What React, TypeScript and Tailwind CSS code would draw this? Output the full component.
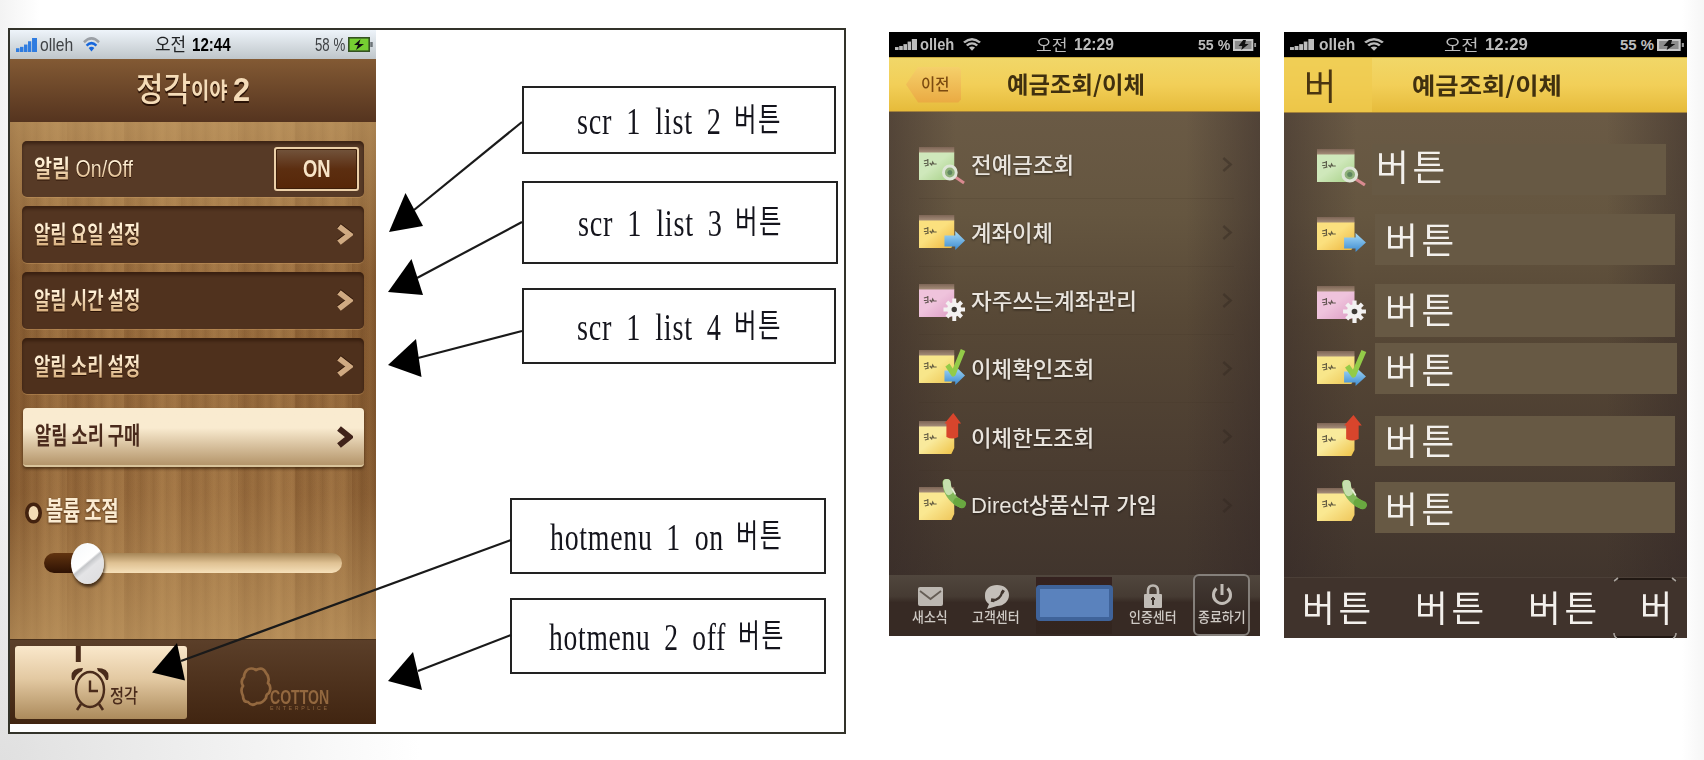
import React, { useLayoutEffect, useRef, useState } from "react";
import clsx from "clsx";

/* Text squeezed or stretched horizontally to the width of its box. */
function Fit({ className, ink, children }: { className?: string; ink?: string; children: React.ReactNode }) {
  const outer = useRef<HTMLSpanElement>(null);
  const inner = useRef<HTMLSpanElement>(null);
  const [scale, setScale] = useState(1);
  useLayoutEffect(() => {
    if (outer.current && inner.current && inner.current.offsetWidth > 0) {
      setScale(outer.current.clientWidth / inner.current.offsetWidth);
    }
  }, []);
  return (
    <span ref={outer} className={clsx("block shrink-0 whitespace-nowrap leading-none", className)}>
      <span ref={inner} className={clsx("inline-block origin-left", ink)} style={{ transform: `scaleX(${scale})` }}>
        {children}
      </span>
    </span>
  );
}

const SANS = "font-['Liberation_Sans','Noto_Sans_CJK_KR',sans-serif]";
const KR = "font-['Noto_Sans_CJK_KR',sans-serif]";

function Signal({ className }: { className: string }) {
  return (
    <svg viewBox="0 0 22 15" preserveAspectRatio="none" className={className} fill="currentColor">
      <rect x="0" y="11" width="3.6" height="4" />
      <rect x="4.2" y="9.5" width="3.6" height="5.5" />
      <rect x="8.4" y="7" width="3.6" height="8" />
      <rect x="12.6" y="3.5" width="3.4" height="11.5" />
      <rect x="16.8" y="0" width="5.2" height="15" />
    </svg>
  );
}

function Wifi({ className, top }: { className: string; top: string }) {
  return (
    <svg viewBox="0 0 18 15" preserveAspectRatio="none" className={className} fill="none" strokeWidth="2.6">
      <path d="M1 5.2 Q9 -2.4 17 5.2" stroke={top} />
      <path d="M3.8 8.6 Q9 3.8 14.2 8.6" stroke="currentColor" />
      <path d="M6 11 Q9 8.4 12 11 L9 14.6Z" fill="currentColor" stroke="none" />
    </svg>
  );
}

function Chevron({ className, w }: { className: string; w: number }) {
  return (
    <svg viewBox="0 0 16 22" preserveAspectRatio="none" className={className} fill="none" stroke="currentColor" strokeWidth={w}>
      <path d="M2 2.5 L12.5 11 L2 19.5" />
    </svg>
  );
}

/* ---------- Alarm phone ---------- */

const rowBase =
  "flex shrink-0 items-center justify-between rounded-[5px] pl-3 shadow-[inset_0_3px_3px_rgba(30,12,0,.45),0_1px_0_rgba(215,165,105,.35)]";
const goldInk = "bg-linear-to-b from-[#fff0d6] from-30% to-[#d3a670] bg-clip-text py-1 -my-1 text-transparent drop-shadow-[0_1px_0_#2a1205]";

function AlarmRow({ label, className, tone }: { label: string; className: string; tone: string }) {
  return (
    <div className={clsx(rowBase, "w-[342px] pr-[11px]", tone, className)}>
      <Fit ink={goldInk} className={clsx("-mt-[3px] w-[106px] text-[24px] font-bold", KR)}>{label}</Fit>
      <Chevron w={5.6} className="h-[21px] w-4 text-[#d0aa82] drop-shadow-[0_-1px_0_#2a1205]" />
    </div>
  );
}

function AlarmClock() {
  return (
    <svg viewBox="0 0 38 66" className="h-[66px] w-[38px] shrink-0" fill="none" stroke="#4a2b1b" strokeWidth="2.4">
      <path d="M7.3 0v16" strokeWidth="5" />
      <ellipse cx="19" cy="43.500" rx="14" ry="17.5" />
      <path d="M19 34.5V45h8" />
      <path d="M1 34q-3-12 11-12 l-1 3q-6 3-8 9z M37 34q3-12-11-12l1 3q6 3 8 9z" fill="#4a2b1b" stroke="none" />
      <path d="M10 58l-4 6 M28 58l4 6" strokeWidth="2.6" />
    </svg>
  );
}

function AlarmPhone() {
  return (
    <div className="flex h-[694px] w-[366px] shrink-0 flex-col bg-[#94693c]">
      <div className="flex h-[29px] shrink-0 items-center bg-linear-to-b from-[#eef4fa] to-[#bfc6ca] text-[#3f4245]">
        <Signal className="ml-[6px] h-[14px] w-[21px] text-[#2f7ce0]" />
        <Fit className={clsx("ml-[3px] w-[33px] text-[19px]", SANS)}>olleh</Fit>
        <Wifi top="#9a9fa5" className="ml-[10px] h-[15px] w-[17px] text-[#1767dc]" />
        <Fit className={clsx("-mt-[3px] ml-[55px] w-[31px] text-[18px] text-[#202224]", KR)}>오전</Fit>
        <Fit className={clsx("ml-[6px] w-[39px] text-[19px] font-bold text-black", SANS)}>12:44</Fit>
        <Fit className={clsx("ml-[84px] w-[30px] text-[19px]", SANS)}>58 %</Fit>
        <svg viewBox="0 0 26 15" className="ml-[3px] h-[15px] w-[26px]">
          <rect x=".8" y=".8" width="20.4" height="13.4" fill="#76cf32" stroke="#345221" strokeWidth="1.6" />
          <path d="M23.5 5v5" stroke="#6d7478" strokeWidth="2.5" />
          <path d="M12.5 2.2 6 8h4l-2 5 8-6h-5z" fill="#111" />
        </svg>
      </div>
      <div className="flex h-[63px] shrink-0 items-center justify-center bg-linear-to-b from-[#835a34] to-[#55341f]">
        <Fit className={clsx("-mt-[5px] w-[114px] font-bold text-[#f5dcb8] drop-shadow-[0_2px_0_#2a1205]", KR)}>
          <span className="text-[33px] font-medium">정각</span>
          <span className="align-[3px] text-[22px]">이야</span>
          <span className="ml-1.5 font-['Liberation_Sans'] text-[34px] font-bold">2</span>
        </Fit>
      </div>
      <div className="flex h-[517px] shrink-0 flex-col bg-[linear-gradient(180deg,rgba(198,160,104,.6)_0%,rgba(150,104,56,.1)_30%,rgba(120,76,36,.15)_55%,rgba(150,104,56,.1)_72%,rgba(196,158,102,.6)_100%),linear-gradient(90deg,rgba(60,25,0,.14)_0%,transparent_12%,rgba(225,180,115,.12)_50%,transparent_88%,rgba(60,25,0,.16)_100%),repeating-linear-gradient(90deg,rgba(60,28,4,.09)_0px,rgba(60,28,4,0)_5px,rgba(225,175,110,.08)_9px,rgba(60,28,4,.05)_13px),repeating-linear-gradient(90deg,rgba(80,36,6,.12)_0px,rgba(80,36,6,.02)_24px,rgba(222,176,112,.14)_40px,rgba(222,176,112,.08)_57px)] px-3 pt-[19px]">
        <div className={clsx(rowBase, "h-[56px] w-[342px] bg-[#573a26] pr-[5px]")}>
          <Fit ink={goldInk} className={clsx("w-[99px] text-[24px] font-medium", SANS)}>
            <span className="font-bold">알림</span> On/Off
          </Fit>
          <div className="flex h-[44px] w-[85px] items-center justify-center rounded-[3px] border-2 border-[#ecd0a8] bg-linear-to-b from-[#72543c] via-[#5c2e10] via-50% to-[#572708] shadow-[inset_0_0_0_1px_#3d1e0a]">
            <Fit className={clsx("w-[28px] text-[23px] font-bold text-[#f8e4c7]", SANS)}>ON</Fit>
          </div>
        </div>
        <AlarmRow label="알림 요일 설정" tone="bg-[#533521]" className="mt-[9px] h-[57px]" />
        <AlarmRow label="알림 시간 설정" tone="bg-[#50321e]" className="mt-[9px] h-[57px]" />
        <AlarmRow label="알림 소리 설정" tone="bg-[#4e301c]" className="mt-[9px] h-[56px]" />
        <div className="mt-[14px] ml-px flex h-[59px] w-[341px] shrink-0 items-center justify-between rounded-[4px] border-b-2 border-[#d9c49b] bg-linear-to-b from-[#f9ebd0] from-35% to-[#b4956a] pr-[11px] pl-3 shadow-[0_2px_3px_rgba(40,20,0,.6)]">
          <Fit className={clsx("-mt-[5px] w-[105px] text-[24px] font-bold text-[#4a2a1c]", KR)}>알림 소리 구매</Fit>
          <Chevron w={6} className="h-[22px] w-4 text-[#40231a]" />
        </div>
        <div className="mt-[31px] ml-[3px] flex h-[30px] items-center">
          <svg viewBox="0 0 17 22" className="h-[22px] w-[17px]">
            <ellipse cx="8.5" cy="11" rx="6.7" ry="8.8" fill="#f3dcb6" stroke="#43220f" strokeWidth="3.6" />
          </svg>
          <Fit className={clsx("-mt-[8px] ml-[4px] w-[73px] text-[26px] font-bold text-[#fbecd2] drop-shadow-[0_1px_1px_#4b2a10]", KR)}>볼륨 조절</Fit>
        </div>
        <div className="mt-[14px] ml-[22px] flex h-[42px] w-[298px] items-center">
          <div className="h-[20px] w-[44px] shrink-0 rounded-l-full bg-linear-to-b from-[#623410] to-[#2e1204]" />
          <div className="h-[20px] w-[254px] shrink-0 rounded-r-full bg-linear-to-b from-[#a58556] via-[#dfc193] via-50% to-[#f6e0b9]" />
          <div className="-ml-[271px] h-[41px] w-[33px] shrink-0 rounded-[50%] bg-[linear-gradient(140deg,#f5f8fa_0%,#fff_46%,#c4c6c9_50%,#e4e4e6_60%,#dcdcde_100%)] shadow-[1px_3px_3px_rgba(30,15,5,.7)]" />
        </div>
      </div>
      <div className="flex h-[85px] shrink-0 border-t border-[#48301b] bg-linear-to-b from-[#5b3f29] to-[#412511] pt-[6px] pl-[5px]">
        <div className="flex h-[73px] w-[172px] shrink-0 rounded-[3px] bg-linear-to-b from-[#fae8cb] via-[#e3c9a2] via-45% to-[#ac8b5c] pl-[56px]">
          <AlarmClock />
          <Fit className={clsx("mt-[39px] ml-[1px] w-[28px] text-[19px] font-medium text-[#4a2b1b]", KR)}>정각</Fit>
        </div>
        <svg viewBox="0 0 34 44" className="mt-[19px] ml-[52px] h-[44px] w-[34px] shrink-0" fill="none" stroke="#93683f" strokeWidth="2.7">
          <path d="M8 5q4-3 9 0 7-4 10 3 4 4 2 10 4 4 1 10-3 1-3 5-4 6-9 5-5 4-9-1-5 0-5-6-3-6 0-10-3-5 1-9 0-4 3-7Z" />
        </svg>
        <div className="mt-[40px] -ml-[3px] text-[#93683f]">
          <Fit className={clsx("w-[59px] text-[21px] font-bold", SANS)}>COTTON</Fit>
          <Fit className={clsx("-mt-[2px] w-[60px] text-[6px] tracking-[3px]", SANS)}>ENTERPLICE</Fit>
        </div>
      </div>
    </div>
  );
}

/* ---------- Callouts ---------- */

function Callout({ text, className, width }: { text: string; className: string; width: string }) {
  return (
    <div className={clsx("flex shrink-0 items-center border-2 border-[#222] bg-white", className)}>
      <Fit className={clsx("font-['Liberation_Serif',serif] text-[37px] text-[#14141c] [word-spacing:8px] tracking-[1px]", width)}>
        {text}
        <span className={clsx("ml-[16px] align-[3px] text-[32px] tracking-[2px]", KR)}>버튼</span>
      </Fit>
    </div>
  );
}

const arrows = [
  { line: "M522 122L414 210", head: "389,232 405.5,193 423,226" },
  { line: "M522 222L417 278", head: "388,292 411.5,259 423,295" },
  { line: "M522 331L418 358", head: "388,365 416,339 421.5,377" },
  { line: "M511 540L181 661", head: "152,672.5 177,643 185,680.5" },
  { line: "M511 635L418 671", head: "388,681 413,652 422,690" },
];

/* ---------- Bank phones ---------- */

type Kind = "search" | "arrow" | "gear" | "check" | "limit" | "call";

const paper: Record<Kind, [string, string]> = {
  search: ["#cfe8bb", "#a5cf84"],
  arrow: ["#fbe07e", "#ecb43c"],
  gear: ["#efc3dc", "#dc9cc4"],
  check: ["#f8e68a", "#ecc452"],
  limit: ["#f9ea9c", "#efc347"],
  call: ["#fae891", "#efc65a"],
};

function NoteIcon({ kind, className }: { kind: Kind; className: string }) {
  const [light, dark] = paper[kind];
  const id = "paper-" + kind;
  return (
    <svg viewBox="0 0 48 40" preserveAspectRatio="none" className={clsx("shrink-0 overflow-visible", className)}>
      <defs>
        <linearGradient id={id} x1="0" y1="0" x2="1" y2="1">
          <stop offset="0" stopColor={light} />
          <stop offset=".45" stopColor={light} />
          <stop offset="1" stopColor={dark} />
        </linearGradient>
        <linearGradient id={id + "-blue"} x1="0" y1="0" x2="0" y2="1">
          <stop offset="0" stopColor="#a9dcf8" />
          <stop offset="1" stopColor="#3c8bd0" />
        </linearGradient>
        <linearGradient id={id + "-top"} x1="0" y1="0" x2="0" y2="1">
          <stop offset="0" stopColor="#7d6556" />
          <stop offset="1" stopColor="#a9917c" />
        </linearGradient>
      </defs>
      <rect x="0" y="3" width="36" height="6" fill={`url(#${id}-top)`} />
      <path d="M0 8.5H36V30L33 36H0Z" fill={`url(#${id})`} />
      <path d="M5 17l4-1M5 19.500h3M9 15v6M6 22l4-1M11 19l2 2 1-3 1 2h3" stroke="#3e3a2e" strokeWidth="1.2" fill="none" opacity=".8" />
      {kind === "search" && (
        <g fill="none">
          <path d="M37 33L46 39" stroke="#d98a90" strokeWidth="3" />
          <circle cx="31.500" cy="28.500" r="6.500" fill="#8fb07a" stroke="#dfe6d8" strokeWidth="3" />
          <circle cx="31.500" cy="28.500" r="2.500" fill="#5f8660" />
        </g>
      )}
      {(kind === "arrow" || kind === "check") && (
        <path d="M26 23.500H37V19L47 28.500L37 38V34.500H26Z" fill={`url(#${id}-blue)`} />
      )}
      {kind === "check" && <path d="M29 18l6 9L45 3" fill="none" stroke="#93cb48" strokeWidth="5" strokeLinejoin="round" />}
      {kind === "gear" && (
        <g stroke="#f3f1f1" strokeWidth="4">
          <path d="M36 17.500V40M25 28.500H47M28.500 21L43.500 36M43.500 21L28.500 36" />
          <circle cx="36" cy="28.500" r="5" fill="#3e3a36" strokeWidth="4.500" />
        </g>
      )}
      {kind === "limit" && <path d="M35 -5L43 5.500H40V19Q34 22 28 19V5.500H26Z" fill="#d8452c" />}
      {kind === "call" && (
        <g fill="none" strokeLinecap="round">
          <path d="M28 -1Q29 13 43 20" stroke="#82b95a" strokeWidth="8" />
          <path d="M28.500 -1Q28.500 3 30.500 7" stroke="#c6e0ae" strokeWidth="8" />
          <path d="M39 18l5 2" stroke="#69a840" strokeWidth="8" />
          <path d="M34 5l3 5" stroke="#e6f2d8" strokeWidth="1.500" />
        </g>
      )}
    </svg>
  );
}

function BankStatus({ wide }: { wide?: boolean }) {
  return (
    <div className="flex h-[25px] shrink-0 items-center bg-black text-[#bdbdbd]">
      <Signal className={clsx("ml-[6px] h-[11px]", wide ? "w-[24px]" : "w-[22px]")} />
      <Fit className={clsx("text-[16px] font-bold", wide ? "ml-[5px] w-[36px]" : "ml-[3px] w-[34px]", SANS)}>olleh</Fit>
      <Wifi top="#b9b9b9" className={clsx("ml-[9px] h-[13px]", wide ? "w-[20px]" : "w-[18px]")} />
      <Fit className={clsx("-mt-[2px] text-[16px]", wide ? "ml-[60px] w-[34px]" : "ml-[55px] w-[31px]", KR)}>오전</Fit>
      <Fit className={clsx("text-[16px] font-bold", wide ? "ml-[7px] w-[43px]" : "ml-[7px] w-[40px]", SANS)}>12:29</Fit>
      <Fit className={clsx("text-[15px] font-bold", wide ? "ml-[92px] w-[34px]" : "ml-[84px] w-[32px]", SANS)}>55 %</Fit>
      <svg viewBox="0 0 26 12" preserveAspectRatio="none" className={clsx("ml-[3px] h-[12px]", wide ? "w-[28px]" : "w-[24px]")}>
        <rect x="1" y="1" width="20" height="10" fill="#8c8c8c" stroke="#c8c8c8" strokeWidth="2" />
        <path d="M24 4v4" stroke="#999" strokeWidth="2" />
        <path d="M11 1L6 7h4l-1 4 8-6h-4l1-4z" fill="#111" />
      </svg>
    </div>
  );
}

const yellowBar = "flex shrink-0 items-center bg-linear-to-b from-[#f1d768] via-[#f2cf58] via-50% to-[#e6bb3a] border-t border-b border-t-[#c9a93d] border-b-[#a3813a]";
const brownBody = "bg-[linear-gradient(90deg,rgba(50,38,38,.4)_0%,transparent_18%,transparent_80%,rgba(50,38,38,.45)_100%),linear-gradient(180deg,#6a5a45_0%,#655640_22%,#574836_45%,#4b3d31_75%,#41352d_100%)]";

const menu: { kind: Kind; label: string; text: string; icon: string }[] = [
  { kind: "search", label: "전예금조회", text: "-mt-[3px] w-[103px]", icon: "-mt-[2px]" },
  { kind: "arrow", label: "계좌이체", text: "-mt-[3px] w-[82px]", icon: "-mt-[1px]" },
  { kind: "gear", label: "자주쓰는계좌관리", text: "-mt-[3px] w-[166px]", icon: "mt-[1px]" },
  { kind: "check", label: "이체확인조회", text: "-mt-[4px] w-[123px]", icon: "-mt-[4px]" },
  { kind: "limit", label: "이체한도조회", text: "-mt-[2px] w-[123px]", icon: "mt-[2px]" },
  { kind: "call", label: "Direct상품신규 가입", text: "mt-[1px] w-[186px]", icon: "-mt-[2px]" },
];

function Tab({ label, width, className, children }: { label: string; width: string; className: string; children: React.ReactNode }) {
  return (
    <div className={clsx("flex shrink-0 flex-col items-center", className)}>
      {children}
      <Fit className={clsx("mt-[3px] text-[14px] font-medium text-[#cfcac5]", width, KR)}>{label}</Fit>
    </div>
  );
}

function BankPhone() {
  return (
    <div className="mt-8 ml-[43px] flex h-[604px] w-[371px] shrink-0 flex-col">
      <BankStatus />
      <div className={clsx(yellowBar, "h-[55px]")}>
        <div className="ml-[17px] flex h-[36px] w-[55px] items-center bg-linear-to-b from-[#f5d06a] to-[#eaaa42] pl-[15px] [clip-path:polygon(0_50%,22%_0,95%_0,100%_8%,100%_92%,95%_100%,22%_100%)]">
          <Fit className={clsx("-mt-[3px] w-[28px] text-[16px] font-medium text-[#7b4a10]", KR)}>이전</Fit>
        </div>
        <Fit className={clsx("-mt-[2px] ml-[46px] w-[138px] text-[23px] font-bold text-[#40300f]", KR)}>예금조회/이체</Fit>
      </div>
      <div className={clsx("flex h-[463px] shrink-0 flex-col pt-[19px]", brownBody)}>
        {menu.map((m) => (
          <div key={m.kind} className="mr-[26px] ml-[30px] flex h-[68px] shrink-0 items-center border-b border-[#3c2f22]/15 last:border-0">
            <NoteIcon kind={m.kind} className={clsx("h-[40px] w-[47px]", m.icon)} />
            <Fit className={clsx("ml-[5px] text-[22px] font-medium text-[#e9e4dd] drop-shadow-[0_1px_1px_rgba(0,0,0,.5)]", m.text, m.kind === "call" ? SANS : KR)}>{m.label}</Fit>
            <Chevron w={3.5} className="mr-px ml-auto h-[17px] w-[11px] text-[#30261e]/40" />
          </div>
        ))}
      </div>
      <div className="flex h-[61px] shrink-0 bg-linear-to-b from-[#50463d] via-[#463b33] via-35% to-[#372a24] to-45%">
        <Tab label="새소식" width="w-[36px]" className="ml-[22px] w-[38px] pt-[12px]">
          <svg viewBox="0 0 25 19" className="h-[19px] w-[25px]">
            <rect width="25" height="19" rx="2" fill="#bcb7b1" />
            <path d="M2 4l10.500 8L23 4" fill="none" stroke="#655d55" strokeWidth="1.800" />
          </svg>
        </Tab>
        <Tab label="고객센터" width="w-[48px]" className="ml-[22px] w-[50px] pt-[10px]">
          <svg viewBox="0 0 26 24" className="-mb-[3px] h-[24px] w-[26px]">
            <path d="M14 0C21 0 26 4 26 10s-5 11-12 11l-10 3 2-5C2 16 2 13 2 10 2 4 7 0 14 0Z" fill="#c4bfb9" />
            <path d="M9 15.500q8 0 10.500-9" fill="none" stroke="#40352e" strokeWidth="2.400" />
            <path d="M8 15l3.500 .5M18.500 6l2.500 1.500" stroke="#40352e" strokeWidth="3.600" />
          </svg>
        </Tab>
        <div className="mt-[2px] ml-[15px] flex h-[57px] w-[76px] shrink-0 items-center justify-center bg-linear-to-b from-[#352220] to-[#33261f]">
          <div className="-mt-[6px] h-[36px] w-[77px] shrink-0 rounded-[4px] border-4 border-[#3f639a] bg-[#5a82bd]" />
        </div>
        <Tab label="인증센터" width="w-[48px]" className="ml-[16px] w-[50px] pt-[9px]">
          <svg viewBox="0 0 18 24" className="-mb-[2px] h-[24px] w-[18px]">
            <path d="M4 11V7q0-5.500 5-5.500T14 7v4" fill="none" stroke="#bcb7b1" strokeWidth="2.600" />
            <rect y="10" width="18" height="14" rx="1" fill="#c1bcb6" />
            <path d="M9 13v8M7 15h4" stroke="#3d332c" strokeWidth="2" />
          </svg>
        </Tab>
        <div className="-mt-[1px] ml-[15px] flex h-[62px] w-[57px] shrink-0 flex-col items-center rounded-[6px] border-2 border-[#85807b] bg-linear-to-b from-[#433a34] to-[#2d211c] pt-[8px]">
          <svg viewBox="0 0 22 22" className="h-[22px] w-[22px]" fill="none" stroke="#c1bcb6" strokeWidth="3">
            <path d="M5.500 4.500a8.500 8.500 0 1 0 11 0M11 0v11" />
          </svg>
          <Fit className={clsx("mt-[3px] w-[48px] text-[14px] font-medium text-[#cfcac5]", KR)}>종료하기</Fit>
        </div>
      </div>
    </div>
  );
}

const panels: { kind: Kind; gap: string; icon: string; panel: string; word: string }[] = [
  { kind: "search", gap: "mt-[31px] h-[51px]", icon: "-mt-[8px]", panel: "ml-[5px] w-[294px] pl-[4px]", word: "-mt-[9px]" },
  { kind: "arrow", gap: "mt-[19px] h-[51px]", icon: "-mt-[12px]", panel: "ml-[8px] w-[300px] pl-[10px]", word: "-mt-[4px]" },
  { kind: "gear", gap: "mt-[19px] h-[53px]", icon: "-mt-[16px]", panel: "ml-[8px] w-[300px] pl-[10px]", word: "-mt-[5px]" },
  { kind: "check", gap: "mt-[6px] h-[51px]", icon: "-mt-[2px]", panel: "ml-[8px] w-[302px] pl-[10px]", word: "-mt-[2px]" },
  { kind: "limit", gap: "mt-[22px] h-[50px]", icon: "-mt-[2px]", panel: "ml-[8px] w-[300px] pl-[10px]", word: "-mt-[4px]" },
  { kind: "call", gap: "mt-[16px] h-[51px]", icon: "-mt-[6px]", panel: "ml-[8px] w-[300px] pl-[10px]", word: "-mt-[1px]" },
];

function ButtonWord({ className }: { className: string }) {
  return <Fit className={clsx("w-[73px] text-[36px] tracking-[4px] text-[#f3f0ec]", KR, className)}>버튼</Fit>;
}

function ButtonPhone() {
  return (
    <div className="mt-8 ml-[24px] flex h-[606px] w-[403px] shrink-0 flex-col">
      <BankStatus wide />
      <div className={clsx(yellowBar, "h-[56px]")}>
        <div className="flex h-full w-[88px] shrink-0 items-center bg-[#efca4e]/70 pl-[20px]">
          <Fit className={clsx("-mt-[2px] w-[32px] text-[36px] text-[#4a3510]", KR)}>버</Fit>
        </div>
        <Fit className={clsx("-mt-[2px] ml-[40px] w-[150px] text-[23px] font-bold text-[#40300f]", KR)}>예금조회/이체</Fit>
      </div>
      <div className={clsx("flex h-[464px] shrink-0 flex-col pl-[33px]", brownBody)}>
        {panels.map((p) => (
          <div key={p.kind} className={clsx("flex shrink-0 items-center", p.gap)}>
            <NoteIcon kind={p.kind} className={clsx("h-[40px] w-[50px]", p.icon)} />
            <div className={clsx("flex h-full shrink-0 items-center bg-[#675944]", p.panel)}>
              <ButtonWord className={p.word} />
            </div>
          </div>
        ))}
      </div>
      <div className="flex h-[61px] shrink-0 items-center border-t border-[#4b3f37] bg-[#40332c] pl-[18px]">
        <ButtonWord className="-mt-[5px]" />
        <ButtonWord className="-mt-[5px] ml-[40px]" />
        <ButtonWord className="-mt-[5px] ml-[40px]" />
        <div className="ml-[12px] flex h-[60px] w-[64px] shrink-0 items-center rounded-[4px] border-y-2 border-[#211813] pl-[27px]">
          <Fit className={clsx("-mt-[5px] w-[32px] text-[36px] text-[#f3f0ec]", KR)}>버</Fit>
        </div>
        <svg viewBox="0 0 64 62" className="-ml-[64px] h-[62px] w-[64px] shrink-0" fill="none" stroke="#a8a29c" strokeWidth="1.600">
          <path d="M1 4l4-3M63 4l-4-3M1 56q0 4 3 5M63 56q0 4-3 5" />
        </svg>
      </div>
    </div>
  );
}

export default function App() {
  return (
    <main className="relative flex h-[760px] w-[1704px] items-start overflow-hidden bg-white bg-[radial-gradient(ellipse_420px_330px_at_0%_100%,#e0e0e0_0%,rgba(255,255,255,0)_100%),linear-gradient(90deg,#f3f3f3_0px,rgba(255,255,255,0)_40px),linear-gradient(270deg,#f6f6f6_0px,rgba(255,255,255,0)_22px)]">
      <section className="mt-7 ml-2 flex h-[706px] w-[838px] shrink-0 border-2 border-[#33332a] bg-white">
        <AlarmPhone />
        <div className="flex w-[464px] shrink-0 flex-col pt-[56px]">
          <Callout text="scr 1 list 2" width="w-[205px]" className="ml-[146px] h-[68px] w-[314px] pl-[53px]" />
          <Callout text="scr 1 list 3" width="w-[205px]" className="mt-[27px] ml-[146px] h-[83px] w-[316px] pl-[54px]" />
          <Callout text="scr 1 list 4" width="w-[205px]" className="mt-[24px] ml-[146px] h-[76px] w-[314px] pl-[53px]" />
          <Callout text="hotmenu 1 on" width="w-[233px]" className="mt-[134px] ml-[134px] h-[76px] w-[316px] pl-[38px]" />
          <Callout text="hotmenu 2 off" width="w-[236px]" className="mt-[24px] ml-[134px] h-[76px] w-[316px] pl-[37px]" />
        </div>
      </section>
      <BankPhone />
      <ButtonPhone />
      <svg viewBox="0 0 1704 760" className="pointer-events-none absolute inset-0 h-[760px] w-[1704px]">
        {arrows.map((a) => (
          <g key={a.line}>
            <path d={a.line} stroke="#1a1a1a" strokeWidth="2.2" />
            <polygon points={a.head} fill="#000" />
          </g>
        ))}
      </svg>
    </main>
  );
}
